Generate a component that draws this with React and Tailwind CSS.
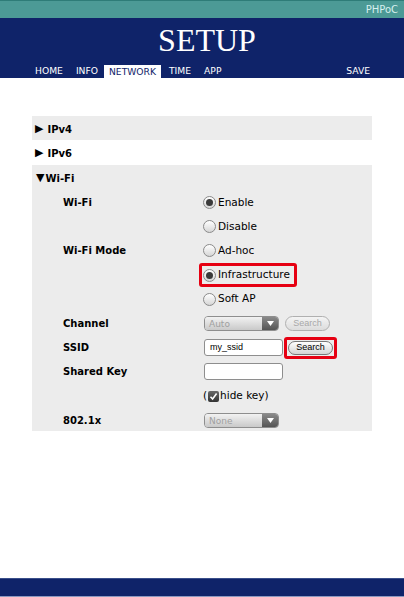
import React from "react";

function Radio({ checked, label }) {
  return (
    <span className="flex items-center">
      <span className="relative w-[13px] h-[13px] rounded-full border border-[#8a8a8a] bg-gradient-to-b from-[#ffffff] to-[#d6d6d6] flex items-center justify-center">
        {checked && <span className="w-[7px] h-[7px] rounded-full bg-[#3a3a3a]" />}
      </span>
      <span className="ml-[2px] text-[10.5px] text-black">{label}</span>
    </span>
  );
}

function Select({ value }) {
  return (
    <span className="flex items-center h-[15px] w-[75px] rounded-[4px] border border-[#8e8e8e] overflow-hidden">
      <span className="flex-1 h-full bg-gradient-to-b from-[#f2f2f2] to-[#c9c9c9] text-[9px] text-[#a0a0a0] pl-[4px] leading-[14px]">{value}</span>
      <span className="w-[16px] h-full bg-gradient-to-b from-[#8a8a8a] to-[#555555] flex items-center justify-center">
        <svg width="7" height="5" viewBox="0 0 7 5"><path d="M0 0 L7 0 L3.5 5 Z" fill="#ffffff" /></svg>
      </span>
    </span>
  );
}

function Row({ label, children }) {
  return (
    <div className="h-[24.2px] flex items-center pt-[3px]">
      <div className="w-[171px] pl-[31px] font-bold text-[10px] text-black" style={{ fontFamily: '"DejaVu Sans", Verdana, sans-serif' }}>{label}</div>
      <div className="flex items-center">{children}</div>
    </div>
  );
}

export default function App() {
  const verd = { fontFamily: '"DejaVu Sans", Verdana, sans-serif' };
  return (
    <div className="w-[404px] h-[597px] bg-white flex flex-col" style={{ fontFamily: '"DejaVu Sans", "Liberation Sans", sans-serif' }}>
      <div className="h-[18px] bg-[#4c9a96] border-t border-[#2e7c78] flex items-center justify-end pr-[6px]">
        <span className="text-[10px] text-[#d7f0ee]" style={verd}>PHPoC</span>
      </div>
      <div className="h-[60px] bg-[#0f2369] flex flex-col">
        <div className="h-[46px] flex items-center justify-center pl-[10px] pb-[3px]">
          <span className="text-white text-[32px] leading-none" style={{ fontFamily: '"Liberation Serif", serif' }}>SETUP</span>
        </div>
        <div className="flex items-end h-[14px] text-[9.2px] text-white" style={verd}>
          <span className="ml-[34px] px-[1px]">HOME</span>
          <span className="ml-[11px] px-[1px]">INFO</span>
          <span className="ml-[5px] bg-white text-[#0f2369] px-[5px] h-[13px] leading-[13px]">NETWORK</span>
          <span className="ml-[8px]">TIME</span>
          <span className="ml-[13px]">APP</span>
          <span className="ml-auto mr-[34px]">SAVE</span>
        </div>
      </div>
      <div className="h-[38px]" />
      <div className="mx-[32px] w-[340px]">
        <div className="h-[24px] bg-[#ececec] flex items-center pl-[3px] pt-[2px] font-bold text-[10px]" style={verd}>
          <span className="text-[11px] mr-[4px]">▶</span>IPv4
        </div>
        <div className="h-[25px] bg-white flex items-center pl-[3px] pt-[2px] font-bold text-[10px]" style={verd}>
          <span className="text-[11px] mr-[4px]">▶</span>IPv6
        </div>
        <div className="bg-[#ececec]">
          <div className="h-[24px] flex items-center pl-[4px] pt-[2px] font-bold text-[10px]" style={verd}>
            <span className="text-[11px] mr-[1px]">▼</span>Wi-Fi
          </div>
          <Row label="Wi-Fi"><Radio checked label="Enable" /></Row>
          <Row label=""><Radio label="Disable" /></Row>
          <Row label="Wi-Fi Mode"><Radio label="Ad-hoc" /></Row>
          <Row label="">
            <span className="-ml-[4px] border-[3px] border-[#e60012] rounded-[3px] pl-[1px] pr-[4px] py-[1px] flex items-center">
              <Radio checked label="Infrastructure" />
            </span>
          </Row>
          <Row label=""><Radio label="Soft AP" /></Row>
          <Row label="Channel">
            <span className="ml-[1px]"><Select value="Auto" /></span>
            <span className="ml-[6px] h-[15px] w-[45px] rounded-full border border-[#b0b0b0] bg-gradient-to-b from-[#f4f4f4] to-[#dcdcdc] text-[9px] text-[#a8a8a8] flex items-center justify-center" style={{ fontFamily: '"Liberation Sans", sans-serif' }}>Search</span>
          </Row>
          <Row label="SSID">
            <span className="ml-[1px] w-[79px] h-[17px] rounded-[3px] border border-[#8e8e8e] bg-white text-[9px] pl-[5px] flex items-center" style={{ fontFamily: '"Liberation Sans", sans-serif' }}>my_ssid</span>
            <span className="ml-[1px] border-[3px] border-[#e60012] rounded-[3px] px-[1px] py-[1px] flex items-center">
              <span className="h-[14px] w-[45px] rounded-full border border-[#777] bg-gradient-to-b from-[#ffffff] to-[#d4d4d4] text-[9px] text-black flex items-center justify-center" style={{ fontFamily: '"Liberation Sans", sans-serif' }}>Search</span>
            </span>
          </Row>
          <Row label="Shared Key">
            <span className="ml-[1px] w-[79px] h-[17px] rounded-[3px] border border-[#8e8e8e] bg-white" />
          </Row>
          <Row label="">
            <span className="flex items-center text-[10.5px]">
              (<span className="mx-[1px] w-[11px] h-[11px] rounded-[2px] bg-gradient-to-b from-[#6a6a6a] to-[#333] flex items-center justify-center">
                <svg width="9" height="9" viewBox="0 0 9 9"><path d="M1.5 4.8 L3.6 7 L7.6 1.6" stroke="#fff" strokeWidth="1.6" fill="none" /></svg>
              </span>hide key)
            </span>
          </Row>
          <Row label="802.1x">
            <span className="ml-[1px]"><Select value="None" /></span>
          </Row>
        </div>
      </div>
      <div className="flex-1" />
      <div className="h-[19px] bg-[#0f2369] border-t border-[#3a4f8a] border-b border-b-[#8a98c0]" />
    </div>
  );
}
